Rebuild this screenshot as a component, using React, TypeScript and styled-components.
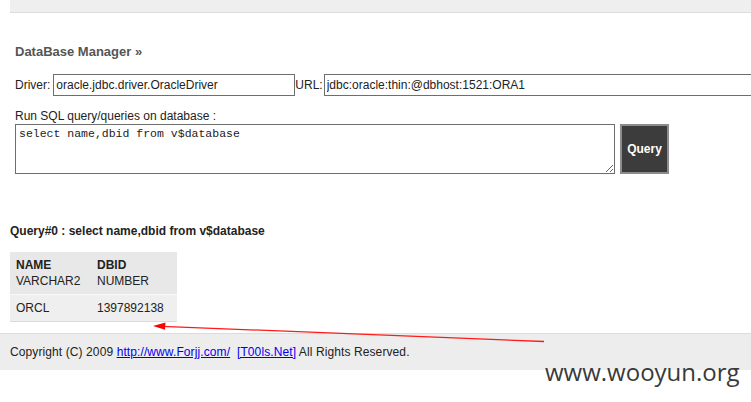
import React from "react";
import styled, { createGlobalStyle } from "styled-components";

const GlobalStyle = createGlobalStyle`
  html, body {
    margin: 0;
    padding: 0;
    background: #ffffff;
  }
  body {
    font-family: "Liberation Sans", Arial, sans-serif;
    font-size: 12px;
    color: #222222;
    overflow: hidden;
  }
`;

const Page = styled.div`
  position: relative;
  width: 751px;
  height: 402px;
  overflow: hidden;
`;

const TopBar = styled.div`
  margin-left: 10px;
  height: 12px;
  background: #efefef;
  border-bottom: 1px solid #dcdcdc;
`;

const Manager = styled.div`
  padding-left: 15px;
`;

const Title = styled.h2`
  margin: 31px 0 0;
  font-size: 13px;
  line-height: 16px;
  font-weight: bold;
  color: #555555;
`;

const DriverRow = styled.div`
  margin-top: 14px;
  display: flex;
  align-items: center;
  height: 22px;
  white-space: nowrap;
`;

const FieldLabel = styled.span<{ $gap?: number }>`
  font-size: 12px;
  color: #222222;
  margin-right: ${(p) => p.$gap ?? 0}px;
`;

const TextInput = styled.input<{ $width: number }>`
  box-sizing: border-box;
  width: ${(p) => p.$width}px;
  flex: none;
  height: 22px;
  margin: 0;
  padding: 0 2px;
  border: 1px solid #6e6e6e;
  font-family: "Liberation Sans", Arial, sans-serif;
  font-size: 12px;
  color: #222222;
  background: #ffffff;
  outline: none;
`;

const SqlLabel = styled.div`
  margin-top: 12px;
  font-size: 12px;
  line-height: 16px;
  color: #222222;
`;

const SqlRow = styled.div`
  display: flex;
  align-items: flex-start;
  gap: 5px;
`;

const SqlArea = styled.textarea`
  box-sizing: border-box;
  width: 600px;
  height: 50px;
  margin: 0;
  padding: 2px 3px;
  border: 1px solid #6e6e6e;
  font-family: "Liberation Mono", "Courier New", monospace;
  font-size: 11.5px;
  line-height: 14px;
  color: #222222;
  outline: none;
`;

const QueryButton = styled.button`
  box-sizing: border-box;
  width: 49px;
  height: 50px;
  margin: 0;
  padding: 0;
  background: #3c3c3c;
  border: 2px solid #8c8c8c;
  color: #ffffff;
  font-family: "Liberation Sans", Arial, sans-serif;
  font-size: 12px;
  font-weight: bold;
  cursor: pointer;
`;

const Result = styled.div`
  padding-left: 10px;
  margin-top: 49px;
`;

const ResultTitle = styled.div`
  font-size: 12px;
  line-height: 16px;
  font-weight: bold;
  color: #222222;
`;

const ResultTable = styled.table`
  margin-top: 13px;
  border-collapse: collapse;
  table-layout: fixed;
  width: 167px;
`;

const HeadCell = styled.th<{ $width: number }>`
  width: ${(p) => p.$width}px;
  box-sizing: border-box;
  padding: 5px 6px;
  background: #e8e8e8;
  text-align: left;
  vertical-align: top;
  font-size: 12px;
  line-height: 16px;
  font-weight: normal;
  color: #222222;
  white-space: nowrap;
`;

const ColName = styled.strong`
  display: block;
  font-weight: bold;
`;

const BodyCell = styled.td`
  padding: 5px 6px;
  background: #efefef;
  border-top: 1px solid #f9f9f9;
  border-bottom: 1px solid #dadada;
  font-size: 12px;
  line-height: 16px;
  color: #222222;
`;

const Footer = styled.div`
  margin-top: 11px;
  height: 37px;
  box-sizing: border-box;
  border-top: 1px solid #dcdcdc;
  background: #ededed;
  padding: 10px 10px 0;
  font-size: 12px;
  line-height: 16px;
  letter-spacing: 0.1px;
  color: #222222;
  white-space: pre;
`;

const FooterLink = styled.a`
  color: #0000ee;
  text-decoration: underline;
`;

const Watermark = styled.div`
  position: absolute;
  left: 545px;
  top: 357px;
  font-family: "Open Sans", sans-serif;
  font-size: 24px;
  line-height: 30px;
  color: #3a3a3a;
  white-space: nowrap;
`;

const ArrowLayer = styled.svg`
  position: absolute;
  left: 0;
  top: 0;
  pointer-events: none;
`;

export default function App() {
  return (
    <Page>
      <GlobalStyle />
      <TopBar />
      <Manager>
        <Title>DataBase Manager »</Title>
        <DriverRow>
          <FieldLabel $gap={3}>Driver:</FieldLabel>
          <TextInput $width={242} defaultValue="oracle.jdbc.driver.OracleDriver" />
          <FieldLabel $gap={1}>URL:</FieldLabel>
          <TextInput $width={480} defaultValue="jdbc:oracle:thin:@dbhost:1521:ORA1" />
        </DriverRow>
        <SqlLabel>Run SQL query/queries on database :</SqlLabel>
        <SqlRow>
          <SqlArea defaultValue="select name,dbid from v$database" />
          <QueryButton>Query</QueryButton>
        </SqlRow>
      </Manager>
      <Result>
        <ResultTitle>Query#0 : select name,dbid from v$database</ResultTitle>
        <ResultTable>
          <thead>
            <tr>
              <HeadCell $width={81}>
                <ColName>NAME</ColName>
                VARCHAR2
              </HeadCell>
              <HeadCell $width={86}>
                <ColName>DBID</ColName>
                NUMBER
              </HeadCell>
            </tr>
          </thead>
          <tbody>
            <tr>
              <BodyCell>ORCL</BodyCell>
              <BodyCell>1397892138</BodyCell>
            </tr>
          </tbody>
        </ResultTable>
      </Result>
      <Footer>
        {"Copyright (C) 2009 "}
        <FooterLink href="#">http://www.Forjj.com/</FooterLink>
        {"  "}
        <FooterLink href="#">[T00ls.Net]</FooterLink>
        {" All Rights Reserved."}
      </Footer>
      <Watermark>www.wooyun.org</Watermark>
      <ArrowLayer width="751" height="402" viewBox="0 0 751 402">
        <line x1="544" y1="341.5" x2="162" y2="326.3" stroke="#ff1a1a" strokeWidth="1.3" />
        <polygon points="153,325.9 165.5,322.6 165,329.8" fill="#ff0000" />
      </ArrowLayer>
    </Page>
  );
}
